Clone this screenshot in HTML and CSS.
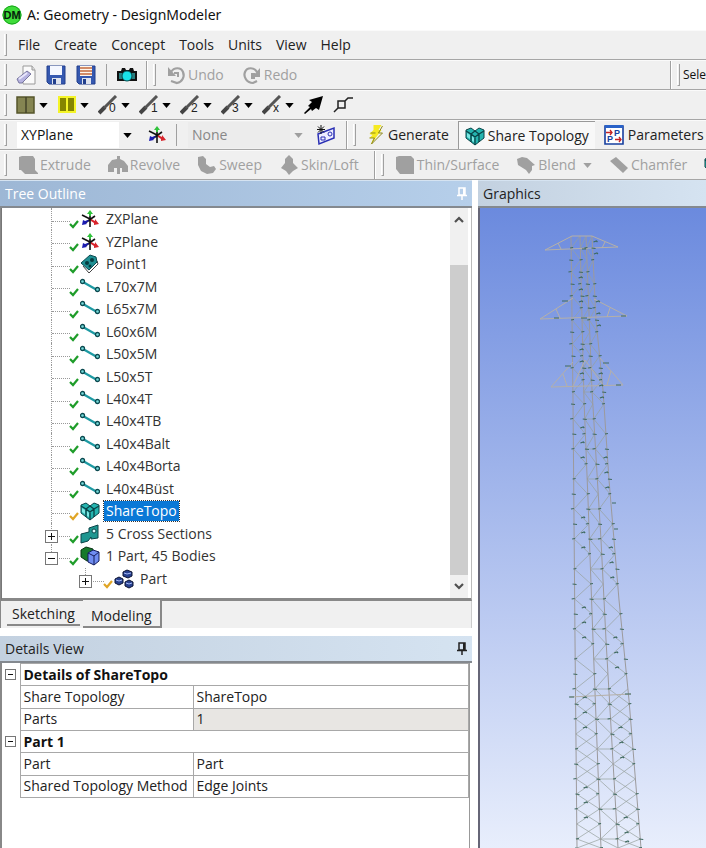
FILE: index.html
```html
<!DOCTYPE html>
<html lang="en">
<head>
<meta charset="utf-8">
<title>A: Geometry - DesignModeler</title>
<link rel="stylesheet" href="styles.css">
</head>
<body>
<svg class="sprite" aria-hidden="true">
  <symbol id="i-axes" viewBox="0 0 20 20"><path d="M10 5v13M2 6l10 5M5 14l10-7" stroke="#111" stroke-width="1.600" fill="none"/><path d="M10 1l3 4H7z" fill="#2fc23a"/><path d="M9 4h2v3H9z" fill="#2fc23a"/><path d="M11 10l4 2v-2l4 5-5 1v-2l-3-2z" fill="#d8242c"/><path d="M8 11l-3 1-2-1-1 5 5-1-1-1 3-2z" fill="#1b1bb0"/></symbol>
  <symbol id="i-line" viewBox="0 0 20 20"><path d="M3 5l14 8" stroke="#1d9aa3" stroke-width="2.2"/><circle cx="2.500" cy="4.500" r="2" fill="#7dd" stroke="#0b4a50" stroke-width="1.300"/><circle cx="17.500" cy="12.500" r="2" fill="#7dd" stroke="#0b4a50" stroke-width="1.300"/></symbol>
  <symbol id="i-point" viewBox="0 0 20 20"><path d="M3 12l6 7 9-9-1-3" fill="#fff" stroke="#444"/><path d="M1 9l9-8 6 2 1 5-8 8z" fill="#1e8f92" stroke="#0b4a50"/><circle cx="7" cy="9" r="2" fill="#063b40"/><circle cx="12" cy="6" r="2" fill="#063b40"/><circle cx="10" cy="12" r="1.500" fill="#063b40"/></symbol>
  <symbol id="i-share" viewBox="0 0 20 20"><path d="M1 4l5-2 4 3 4-3 5 2v8l-9 7-9-7z" fill="#25b5b0" stroke="#0a4448"/><path d="M1 5l5 3 4-3 4 3 5-3M6 8v8M14 8v8M10 11v8M6 8l4 3 4-3" fill="none" stroke="#0a4448" stroke-width="1.300"/><path d="M7 10l2 2v4l-2-1zM2 7l3 2v4l-3-2z" fill="#7ee8e4"/></symbol>
  <symbol id="i-section" viewBox="0 0 20 20"><path d="M1 10l8-2V4l9-3v13l-7 1v-2l-3 4-7 2z" fill="#1e9690" stroke="#0a4448"/><circle cx="14" cy="7" r="2" fill="#d8fbfa" stroke="#0a4448"/></symbol>
  <symbol id="i-body" viewBox="0 0 20 20"><path d="M1 4l5-3 7 2v11l-6 1-6-4z" fill="#157a2a" stroke="#0a3413"/><path d="M8 7l5-3 6 2v9l-5 4-6-3z" fill="#6f8cf0" stroke="#131c5c"/><path d="M8 7l6 3 5-4M14 10v9" stroke="#131c5c" fill="none"/></symbol>
  <symbol id="i-parts" viewBox="0 0 20 20"><g fill="#27408f" stroke="#0b1230"><path d="M9 3l4-2 5 2v4l-4 2-5-2zM1 10l4-2 4 2v4l-4 2-4-2zM11 13l4-2 4 2v4l-4 2-4-2z"/></g><path d="M10 4l3 1 4-1M2 11l3 1 3-1M12 14l3 1 3-1" stroke="#a5b8f5" fill="none"/></symbol>
  <symbol id="i-check" viewBox="0 0 10 10"><path d="M1 5l3 3 5-6" fill="none" stroke="currentColor" stroke-width="2.200"/></symbol>
  <symbol id="i-pin" viewBox="0 0 10 14"><path d="M2 1h6v7H2zM0 8.500h10M5 8v5" fill="none" stroke="currentColor" stroke-width="1.500"/><path d="M6 1h2v7H6z" fill="currentColor"/></symbol>
  <symbol id="i-pencil" viewBox="0 0 20 20"><path d="M1 18l6-6" stroke="#444" stroke-width="4"/><path d="M6 13L18 1" stroke="#555" stroke-width="3"/></symbol>
  <symbol id="i-down" viewBox="0 0 10 6"><path d="M0 0h10L5 6z" fill="currentColor"/></symbol>
</svg>

<header class="titlebar">
  <svg class="logo" viewBox="0 0 20 20"><circle cx="10" cy="10" r="9.500" fill="#3fdc3a"/><circle cx="10" cy="10" r="9" fill="none" stroke="#19a51d"/><text x="10" y="14" text-anchor="middle" class="logo-text">DM</text></svg>
  <h1>A: Geometry - DesignModeler</h1>
</header>

<nav class="bar menu">
  <span class="grip"></span>
  <button>File</button><button>Create</button><button>Concept</button><button>Tools</button><button>Units</button><button>View</button><button>Help</button>
</nav>

<div class="bar files">
  <span class="grip"></span>
  <div class="group icons">
    <button aria-label="New"><svg class="ico" viewBox="0 0 20 20"><path d="M7 1h9l3 4v14H7z" fill="#fafafa" stroke="#999"/><path d="M16 1v4h3" fill="#ddd" stroke="#999"/><path d="M1 14L11 6l4 3-9 9H3z" fill="#b6b3e0" stroke="#77759f"/><path d="M3 14l8-6" stroke="#e8e6fb" stroke-width="2"/></svg></button>
    <button aria-label="Save"><svg class="ico" viewBox="0 0 20 20"><path d="M1 1h18v18H3l-2-2z" fill="#3558b0" stroke="#223f8c"/><path d="M4 1h12v9H4z" fill="#f4f7ff"/><path d="M6 13h9v6H6z" fill="#dfe4ee"/><path d="M7 14h3v5H7z" fill="#223f8c"/></svg></button>
    <button aria-label="Save as"><svg class="ico" viewBox="0 0 20 20"><path d="M1 1h18v18H3l-2-2z" fill="#3558b0" stroke="#223f8c"/><path d="M4 1h12v10H4z" fill="#fff6ec"/><path d="M4 3h12M4 6h12M4 9h12" stroke="#c46a3c" stroke-width="1.400"/><path d="M6 13h9v6H6z" fill="#dfe4ee"/><path d="M7 14h3v5H7z" fill="#223f8c"/></svg></button>
    <span class="sep"></span>
    <button aria-label="Image capture"><svg class="ico" viewBox="0 0 20 20"><path d="M0 6h4l1-3h3l1 2h3l1-2h3l1 3h3v10H0z" fill="#111"/><path d="M2 8h3v6H2zM15 8h3v6h-3z" fill="#2b7f80"/><circle cx="10" cy="11" r="5" fill="#19e2e8" stroke="#0a5558"/></svg></button>
  </div>
  <span class="edge"></span><span class="grip"></span>
  <div class="group off history">
    <button disabled><svg class="ico" viewBox="0 0 20 20"><path d="M8 8h4v4" fill="none" stroke="currentColor" stroke-width="2"/><path d="M5 7c3-5 10-5 12 0s-1 10-6 11l-6-2" fill="none" stroke="currentColor" stroke-width="2.200"/><path d="M2 2v9h8z" fill="currentColor"/></svg>Undo</button>
    <button disabled><svg class="ico" viewBox="0 0 20 20"><path d="M15 7C12 2 5 2 3 7s2 11 8 11l4-2" fill="none" stroke="currentColor" stroke-width="2.200"/><path d="M18 3v9h-8z" fill="currentColor"/><path d="M9 8h4v6H9z" fill="currentColor"/></svg>Redo</button>
  </div>
  <span class="fill"></span>
  <span class="edge"></span><span class="grip"></span>
  <span class="filter">Sele</span>
</div>

<div class="bar picks">
  <span class="grip"></span>
  <button aria-label="Face colour"><svg class="ico" viewBox="0 0 20 20"><path d="M1 2h17v16H1z" fill="#858552" stroke="#55552b" stroke-width="1.500"/><path d="M10 2v16" stroke="#45452a" stroke-width="1.500"/></svg><svg class="tri"><use href="#i-down"/></svg></button>
  <button aria-label="Edge colour"><svg class="ico" viewBox="0 0 20 20"><path d="M1 1h18v17H1z" fill="#f4f428"/><path d="M3 3h6v13H3zM11 3h6v13h-6z" fill="#858500"/></svg><svg class="tri"><use href="#i-down"/></svg></button>
  <button aria-label="Edges 0"><svg class="ico" viewBox="0 0 20 20"><use href="#i-pencil"/><text x="11" y="17" class="digit">0</text></svg><svg class="tri"><use href="#i-down"/></svg></button>
  <button aria-label="Edges 1"><svg class="ico" viewBox="0 0 20 20"><use href="#i-pencil"/><text x="12" y="17" class="digit">1</text></svg><svg class="tri"><use href="#i-down"/></svg></button>
  <button aria-label="Edges 2"><svg class="ico" viewBox="0 0 20 20"><use href="#i-pencil"/><text x="11" y="17" class="digit">2</text></svg><svg class="tri"><use href="#i-down"/></svg></button>
  <button aria-label="Edges 3"><svg class="ico" viewBox="0 0 20 20"><use href="#i-pencil"/><text x="11" y="17" class="digit">3</text></svg><svg class="tri"><use href="#i-down"/></svg></button>
  <button aria-label="Edges x"><svg class="ico" viewBox="0 0 20 20"><use href="#i-pencil"/><text x="11" y="17" class="digit">x</text></svg><svg class="tri"><use href="#i-down"/></svg></button>
  <button class="single" aria-label="Direction"><svg class="ico" viewBox="0 0 20 20"><path d="M20 1l-4 14-3-2-4 3-1-2-6 5-1-1 6-6-2-1 4-4-3-2z" fill="#000"/></svg></button>
  <button class="single" aria-label="Vertex"><svg class="ico" viewBox="0 0 20 20"><path d="M5 6h7v7H5zM12 6l3-3h5M1 17l4-4" fill="none" stroke="#222" stroke-width="1.500"/></svg></button>
</div>

<div class="bar planes">
  <span class="grip"></span>
  <label class="combo"><select aria-label="Plane"><option>XYPlane</option></select><svg class="tri"><use href="#i-down"/></svg></label>
  <button aria-label="New plane"><svg class="ico"><use href="#i-axes"/></svg></button>
  <span class="sep"></span>
  <label class="combo none"><select aria-label="Sketch" disabled><option>None</option></select><svg class="tri"><use href="#i-down"/></svg></label>
  <button aria-label="New sketch"><svg class="ico" viewBox="0 0 20 20"><path d="M2 9l16-6v10L3 19z" fill="#eef" stroke="#2a2fb4" stroke-width="1.500"/><path d="M5 12h4v3H5z" fill="none" stroke="#2a2fb4"/><circle cx="14" cy="9" r="2" fill="none" stroke="#2a2fb4"/><path d="M5 0v9M1 4.500h8M2 1.500l6 6M8 1.500l-6 6" stroke="#111"/></svg></button>
  <span class="edge"></span><span class="grip"></span>
  <div class="group actions">
    <button><svg class="ico slim" viewBox="0 0 15 20"><path d="M5 0h8l-3 5h3L2 20l3-7H1l3-3-3-1 4-4z" fill="#f6ea22"/><path d="M14 1l-4 7h4L3 19l3-6H1M2 8h5" fill="none" stroke="#8f8a1a"/></svg>Generate</button>
    <button class="pressed"><svg class="ico"><use href="#i-share"/></svg>Share Topology</button>
    <button><svg class="ico" viewBox="0 0 20 20"><path d="M1 1h18v18H1z" fill="#fff" stroke="#173f9f" stroke-width="1.600"/><path d="M1 0h18v3H1z" fill="#2a62c8"/><text x="10" y="11" class="pp">P</text><text x="3" y="17" class="pp">P</text><path d="M2 7.500h6M6 5l2 2.500L6 10M11 14.500h6M15 12l2 2.500-2 2.500" stroke="#c62222" stroke-width="1.300" fill="none"/></svg>Parameters</button>
  </div>
</div>

<div class="bar features off">
  <span class="grip"></span>
  <div class="group">
    <button disabled><svg class="ico" viewBox="0 0 20 20"><path d="M1 2l3-1h11l2 3v11l3 3v1H7l-4-4H1z" fill="currentColor"/></svg>Extrude</button>
    <button disabled><svg class="ico" viewBox="0 0 20 20"><path d="M0 17v-7l4-5 5-1V1h3v3l4 2 4 5v6h-6v-4h-2v6H9v-6H6v4z" fill="currentColor"/></svg>Revolve</button>
    <button disabled><svg class="ico" viewBox="0 0 20 20"><path d="M1 2l5-1 3 3v5l4 3 4-1 2 3-3 4-6 1-6-3-3-6z" fill="currentColor"/></svg>Sweep</button>
    <button disabled><svg class="ico" viewBox="0 0 20 20"><path d="M10 0l4 4v4l5 5-5 3-4 4-3-4-5-3 4-5V4z" fill="currentColor"/></svg>Skin/Loft</button>
  </div>
  <span class="edge"></span><span class="grip"></span>
  <div class="group">
    <button disabled><svg class="ico" viewBox="0 0 20 20"><path d="M1 2l3-1h12l3 3v15H5l-4-5z" fill="currentColor"/></svg>Thin/Surface</button>
    <button disabled><svg class="ico" viewBox="0 0 20 20"><path d="M1 4l5-2 5 1 8 7-3 1v4l-3 4-3-4-8-5z" fill="currentColor"/></svg>Blend<svg class="tri"><use href="#i-down"/></svg></button>
    <button disabled><svg class="ico" viewBox="0 0 20 20"><path d="M1 6l6-4 12 11-5 5z" fill="currentColor"/></svg>Chamfer</button>
    <button aria-label="Point"><svg class="ico"><use href="#i-share"/></svg></button>
  </div>
</div>

<main>
  <div class="side">
    <section class="outline">
      <h2 class="caption active">Tree Outline<svg class="pin"><use href="#i-pin"/></svg></h2>
      <div class="treebox">
        <ul class="tree">
          <li><svg class="chk"><use href="#i-check"/></svg><svg class="ico"><use href="#i-axes"/></svg><span>ZXPlane</span></li>
          <li><svg class="chk"><use href="#i-check"/></svg><svg class="ico"><use href="#i-axes"/></svg><span>YZPlane</span></li>
          <li><svg class="chk"><use href="#i-check"/></svg><svg class="ico"><use href="#i-point"/></svg><span>Point1</span></li>
          <li><svg class="chk"><use href="#i-check"/></svg><svg class="ico"><use href="#i-line"/></svg><span>L70x7M</span></li>
          <li><svg class="chk"><use href="#i-check"/></svg><svg class="ico"><use href="#i-line"/></svg><span>L65x7M</span></li>
          <li><svg class="chk"><use href="#i-check"/></svg><svg class="ico"><use href="#i-line"/></svg><span>L60x6M</span></li>
          <li><svg class="chk"><use href="#i-check"/></svg><svg class="ico"><use href="#i-line"/></svg><span>L50x5M</span></li>
          <li><svg class="chk"><use href="#i-check"/></svg><svg class="ico"><use href="#i-line"/></svg><span>L50x5T</span></li>
          <li><svg class="chk"><use href="#i-check"/></svg><svg class="ico"><use href="#i-line"/></svg><span>L40x4T</span></li>
          <li><svg class="chk"><use href="#i-check"/></svg><svg class="ico"><use href="#i-line"/></svg><span>L40x4TB</span></li>
          <li><svg class="chk"><use href="#i-check"/></svg><svg class="ico"><use href="#i-line"/></svg><span>L40x4Balt</span></li>
          <li><svg class="chk"><use href="#i-check"/></svg><svg class="ico"><use href="#i-line"/></svg><span>L40x4Borta</span></li>
          <li><svg class="chk"><use href="#i-check"/></svg><svg class="ico"><use href="#i-line"/></svg><span>L40x4Büst</span></li>
          <li><svg class="chk warn"><use href="#i-check"/></svg><svg class="ico"><use href="#i-share"/></svg><span class="selected">ShareTopo</span></li>
          <li><button class="toggle plus" aria-label="Expand"></button><svg class="chk"><use href="#i-check"/></svg><svg class="ico"><use href="#i-section"/></svg><span>5 Cross Sections</span></li>
          <li class="last"><button class="toggle" aria-label="Collapse"></button><svg class="chk"><use href="#i-check"/></svg><svg class="ico"><use href="#i-body"/></svg><span>1 Part, 45 Bodies</span></li>
          <li class="child"><button class="toggle plus" aria-label="Expand"></button><svg class="chk warn"><use href="#i-check"/></svg><svg class="ico"><use href="#i-parts"/></svg><span>Part</span></li>
        </ul>
        <div class="scroll">
          <svg viewBox="0 0 10 7"><path d="M1 6l4-4 4 4" fill="none" stroke="#505050" stroke-width="2.200"/></svg>
          <div class="thumb"></div>
          <svg viewBox="0 0 10 7"><path d="M1 1l4 4 4-4" fill="none" stroke="#505050" stroke-width="2.200"/></svg>
        </div>
      </div>
      <div class="tabs"><button>Sketching</button><button class="current">Modeling</button></div>
    </section>
    <section class="details">
      <h2 class="caption">Details View<svg class="pin"><use href="#i-pin"/></svg></h2>
      <div class="sheet">
        <table>
          <colgroup><col class="gut-col"><col class="name-col"><col></colgroup>
          <tr><td class="gut"><button class="toggle" aria-label="Collapse"></button></td><th colspan="2">Details of ShareTopo</th></tr>
          <tr><td class="gut"></td><td>Share Topology</td><td>ShareTopo</td></tr>
          <tr><td class="gut"></td><td>Parts</td><td class="locked">1</td></tr>
          <tr><td class="gut"><button class="toggle" aria-label="Collapse"></button></td><th colspan="2">Part 1</th></tr>
          <tr><td class="gut"></td><td>Part</td><td>Part</td></tr>
          <tr><td class="gut"></td><td>Shared Topology Method</td><td>Edge Joints</td></tr>
        </table>
      </div>
    </section>
  </div>
  <section class="graphics">
    <h2 class="caption">Graphics</h2>
    <div class="view"><svg class="tower" viewBox="480 208 226 640" width="226" height="640"></svg></div>
  </section>
</main>
<script src="tower.js"></script>
</body>
</html>
```
FILE: styles.css
```css
* { box-sizing: border-box; }
body {
  margin: 0;
  min-height: 100vh;
  display: flex;
  flex-direction: column;
  overflow: hidden;
  background: #f0f0f0;
  color: #222;
  font: 14px/20px "Open Sans", "Noto Sans", sans-serif;
}
button {
  border: 0;
  padding: 0;
  margin: 0;
  background: none;
  color: inherit;
  font: inherit;
  white-space: nowrap;
  display: flex;
  align-items: center;
  flex: none;
}
h1, h2 { margin: 0; font-size: 14px; font-weight: 400; }
.sprite { position: absolute; width: 0; height: 0; }
.ico { width: 20px; height: 20px; flex: none; display: block; overflow: visible; }
.slim { width: 16px; }
.tri { width: 9px; height: 5px; flex: none; }

.titlebar { height: 30px; background: #fff; display: flex; align-items: center; gap: 5px; padding-left: 2px; color: #111; }
.titlebar h1 { font-family: "Noto Sans", "Open Sans", sans-serif; }
.logo { width: 20px; height: 20px; }
.logo-text { font: bold 11px "Liberation Sans", sans-serif; fill: #04200a; }

.bar {
  height: 30px;
  flex: none;
  display: flex;
  align-items: center;
  padding-left: 4px;
  border-bottom: 1px solid #a6a6a6;
  border-top: 1px solid #fafafa;
  overflow: hidden;
  white-space: nowrap;
}
.grip { width: 3px; height: 22px; flex: none; border-right: 1px solid #a0a0a0; border-bottom: 1px solid #a0a0a0; border-left: 1px solid #fff; }
.edge { width: 2px; align-self: stretch; flex: none; background: #a0a0a0; border-right: 1px solid #fff; }
.sep { width: 1px; height: 22px; flex: none; background: #a0a0a0; }
.group { display: flex; align-items: center; flex: none; }
.fill { flex: 1; }
.off, .off button { color: #a0a0a0; }

.menu { gap: 14px; }
.menu .grip { margin-right: -3px; }

.icons { gap: 10px; padding: 0 9px; }
.files .edge + .grip { margin-left: 5px; }
.history { gap: 18px; padding-left: 10px; }
.history button { gap: 2px; }
.filter { padding-left: 3px; flex: none; font-size: 12px; color: #111; }

.picks { color: #000; }
.picks .grip { margin-right: 9px; }
.picks button { width: 41px; gap: 3px; }
.picks .single { width: 30px; }
.digit { font: 12px "Liberation Sans", sans-serif; fill: #222; }

.planes .grip { margin-right: 10px; }
.combo { width: 120px; height: 26px; position: relative; flex: none; margin-right: 10px; }
.combo select {
  appearance: none;
  width: 100%;
  height: 26px;
  border: 0;
  border-right: 18px solid #f0f0f0;
  border-radius: 0;
  padding: 0 4px;
  background: #fff;
  color: #111;
  font: inherit;
  opacity: 1;
}
.combo .tri { position: absolute; right: 5px; top: 11px; color: #000; pointer-events: none; }
.planes .sep { margin: 0 11px 0 9px; }
.planes .none { margin-right: 8px; }
.none select { background: #ececec; color: #888; }
.none .tri { color: #a0a0a0; }
.planes .edge { margin-left: 10px; }
.planes .edge + .grip { margin: 0 12px 0 5px; }
.actions { align-self: stretch; gap: 9px; }
.actions button { gap: 4px; align-self: stretch; }
.actions .pressed { background: #f8f8f8; border-left: 1px solid #999; border-top: 1px solid #999; padding: 0 6px; gap: 3px; }
.pp { font: bold 9px "Liberation Sans", sans-serif; fill: #173f9f; }

.features .group { gap: 17px; padding-left: 11px; }
.features button { gap: 2px; }
.features .tri { margin-left: 5px; }
.features .edge { margin-left: 15px; }
.features .edge + .grip { margin-left: 5px; }

main { flex: 1; display: flex; background: #fff; min-width: 0; }
.side { flex: 0 0 472px; display: flex; flex-direction: column; }
.caption {
  height: 27px;
  display: flex;
  align-items: center;
  justify-content: space-between;
  padding: 0 5px;
  color: #222;
  background: linear-gradient(90deg, #c3d1e0, #d5e3f1);
  border-bottom: 2px solid #84898f;
}
.active { color: #fff; background: linear-gradient(90deg, #9db7d5, #b6cfea); border-top: 1px solid #d5e3f1; }
.pin { width: 10px; height: 14px; }
.outline { background: #f0f0f0; border-left: 1px solid #888; }
.outline .caption { margin-left: -1px; height: 28px; }
.treebox { display: flex; justify-content: space-between; background: #fff; border-left: 1px solid #777; border-right: 1px solid #bbb; border-bottom: 3px solid #888; height: 393px; padding-right: 3px; }

.tree { list-style: none; margin: 0; padding: 0; height: 382px; flex: 1; display: grid; grid-auto-rows: 1fr; color: #333; }
.tree li { position: relative; display: flex; align-items: center; padding-left: 67px; }
.tree li::before { content: ""; position: absolute; left: 49px; top: 0; bottom: 0; border-left: 1px dotted #999; }
.tree li::after { content: ""; position: absolute; left: 50px; top: 13px; width: 18px; border-top: 1px dotted #999; }
.tree .last::before { bottom: 50%; }
.tree .child { padding-left: 101px; }
.tree .child::before { left: 83px; bottom: 50%; }
.tree .child::after { left: 84px; }
.tree .ico { margin-right: 4px; }
.tree span { padding: 0 2px; }
.tree .selected { background: #0a78d6; color: #fff; outline: 1px dotted #333; }
.chk { width: 10px; height: 10px; margin: 10px 1px 0 0; color: #1f9d2a; z-index: 1; flex: none; }
.warn { color: #e0a526; }
.toggle { position: relative; width: 13px; height: 13px; border: 1px solid #777; background: #fff; z-index: 1; }
.toggle::before { content: ""; position: absolute; left: 2px; right: 2px; top: 5px; height: 1px; background: #111; }
.plus::after { content: ""; position: absolute; top: 2px; bottom: 2px; left: 5px; width: 1px; background: #111; }
.tree .toggle { position: absolute; left: 43px; top: 7px; }
.tree .child .toggle { left: 77px; }

.scroll { width: 18px; background: #f0f0f0; display: flex; flex-direction: column; align-items: center; padding: 8px 0; }
.scroll svg { width: 10px; height: 7px; }
.thumb { width: 18px; flex: 1; background: #cdcdcd; margin: 42px 0 8px; }

.tabs { display: flex; height: 27px; padding-left: 6px; border-right: 1px solid #ccc; align-items: flex-start; }
.tabs button { height: 25px; padding: 3px 5px 0; border-bottom: 2px solid #888; margin-right: 3px; }
.tabs .current { height: 28px; padding: 6px 8px 0; border-right: 2px solid #888; background: #f0f0f0; margin-top: -1px; }

.details { margin-top: 8px; flex: 1; display: flex; flex-direction: column; }
.sheet { flex: 1; border-left: 2px solid #888; border-right: 1px solid #999; margin-right: 2px; }
table { width: 100%; height: 135px; border-collapse: collapse; table-layout: fixed; color: #222; }
td, th { padding: 0 3px; border: 1px solid #a8a8a8; text-align: left; line-height: 20px; white-space: nowrap; }
th { font-weight: 700; color: #111; }
.gut-col { width: 18px; }
.name-col { width: 173px; }
.gut { border: 0; padding: 0 3px; }
.gut .toggle { width: 11px; height: 11px; }
.gut .toggle::before { top: 4px; }
.locked { background: #e8e6e3; }

.graphics { flex: 1; min-width: 0; margin-left: 6px; display: flex; flex-direction: column; }
.graphics .caption { border-top: 1px solid #d5e3f1; height: 28px; }
.view { flex: 1; border-left: 2px solid #667; background: linear-gradient(#6b8ade, #e8eefc); overflow: hidden; }
.tower { display: block; }
.leg { fill: none; stroke: #9c9a9c; stroke-width: 1; }
.arm { fill: none; stroke: #b5b0a8; stroke-width: 1; }
.brace { fill: none; stroke: #96a19c; stroke-width: 0.7; }
.joint { fill: none; stroke: #3f6a60; stroke-width: 1.2; }
```
FILE: tower.js
```js
// Lattice tower: each leg is a list of [y, x] knots.
const legs = [
  [[236, 571], [400, 573], [640, 575], [848, 577]],
  [[236, 580], [400, 584], [500, 588], [640, 593], [848, 601]],
  [[236, 586], [390, 592], [540, 601], [640, 606], [848, 618]],
  [[236, 592], [320, 596], [390, 603], [480, 609], [600, 619], [700, 629], [848, 641]]
];
const svg = document.querySelector(".tower");

function at(leg, y) {
  for (let i = 1; i < leg.length; i++) {
    const [y0, x0] = leg[i - 1], [y1, x1] = leg[i];
    if (y <= y1) return x0 + (x1 - x0) * (y - y0) / (y1 - y0);
  }
  return leg[leg.length - 1][1];
}

function draw(name, d) {
  const p = document.createElementNS("http://www.w3.org/2000/svg", "path");
  p.setAttribute("class", name);
  p.setAttribute("d", d);
  svg.append(p);
}

const levels = [];
for (let y = 236; y < 848; y += y < 400 ? 12 : 15) levels.push(y);
levels.push(848);

let braces = "", joints = "";
levels.slice(1).forEach((y, i) => {
  const top = levels[i];
  for (const [a, b] of [[0, 1], [1, 2], [2, 3]]) {
    const full = y > 690 && a !== 1;
    if (i % 2 || full) braces += `M${at(legs[a], top)} ${top}L${at(legs[b], y)} ${y}`;
    if (!(i % 2) || full) braces += `M${at(legs[b], top)} ${top}L${at(legs[a], y)} ${y}`;
  }
  if (i % 2 === 0) braces += `M${at(legs[1], y)} ${y}H${at(legs[2], y)}`;
  legs.forEach((leg, n) => {
    const k = (i * 7 + n * 5) % 6;
    if (k < 5) joints += `M${at(leg, y) - (k % 3) - 1} ${y}l${3 + k % 2} ${k % 2 - 0.5}`;
    if (k > 2 && n !== 1 && n < 3) joints += `M${at(leg, y) + 7} ${y - 6}l3 -1l1 1`;
  });
});

draw("brace", braces);
draw("leg", legs.map(l => "M" + l.map(([y, x]) => `${x} ${y}`).join("L")).join(""));
draw("arm", "M572 236L545 250L592 248L618 247L592 236ZM558 243l3 6M605 242l-3 6");
draw("arm", "M573 298L540 319L627 316L594 299M556 309l4 9M610 308l-3 9");
draw("arm", "M573 362L551 387L623 385L600 358M563 374l4 12M611 371l-4 14M585 360l-12 26M585 360l18 25");
draw("arm", "M570 697L631 694");
draw("joint", joints + "M562 301h6M565 366h6M603 363h6M616 385h5M569 697h5M625 694h6M612 503h4M614 529h4M621 316h5M554 318h5M582 249h4M581 318h6");
```
